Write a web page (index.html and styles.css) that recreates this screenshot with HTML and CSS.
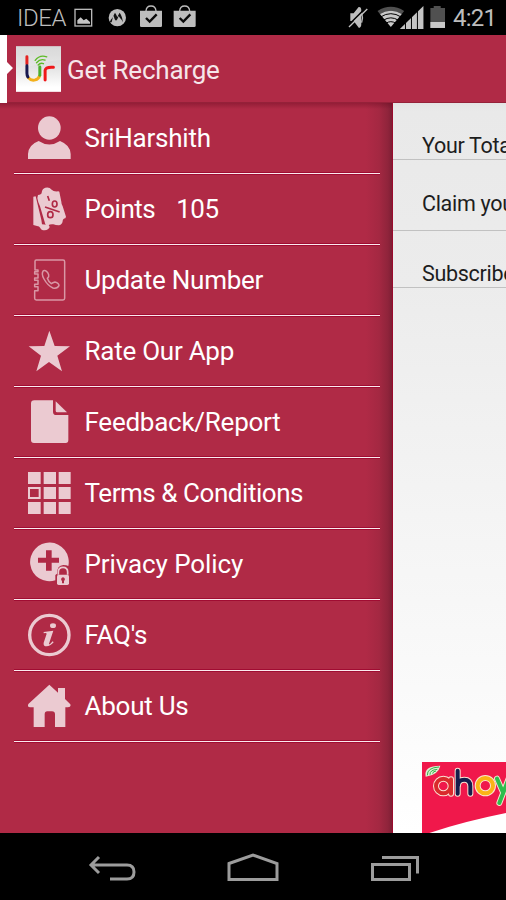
FILE: index.html
```html
<!DOCTYPE html>
<html lang="en">
<head>
<meta charset="utf-8">
<title>Get Recharge</title>
<link rel="stylesheet" href="styles.css">
</head>
<body>
<div class="screen">
  <header class="status">
    <span class="carrier">IDEA</span>
    <svg class="status-left" viewBox="210 0 390 105" aria-hidden="true">
      <rect x="225" y="28" width="50" height="50" fill="none" stroke="#b9b9b9" stroke-width="4"/>
      <path d="M232 71V61l10-9 9 9 8-5 11 10v5z" fill="#c4c4c4"/>
      <circle cx="352" cy="53" r="26" fill="#bdbdbd"/>
      <path d="M335 67q4-20 10-29 5 7 7 14 3-8 7-14 7 9 10 29-4-9-9-13l-4-6-4 10-4 4-4-4-3-10-4 6q-5 4-8 13z" fill="#111"/>
      <g id="bag">
        <path d="M420 32h66v45q0 4-4 4h-58q-4 0-4-4z" fill="#bdbdbd"/>
        <path d="M438 33q1-15 15-15t15 15" fill="none" stroke="#bdbdbd" stroke-width="4"/>
        <path d="M438 54l11 11 21-22" fill="none" stroke="#0a0a0a" stroke-width="7"/>
      </g>
      <use href="#bag" x="101"/>
    </svg>
    <span class="grow"></span>
    <svg class="status-right" viewBox="280 0 310 105" aria-hidden="true">
      <path d="M293 40h10l15-19q8-1 8 10v42q0 10-7 11l-16-21h-10z" fill="#bdbdbd"/>
      <path d="M327 37q5 16 0 31" fill="none" stroke="#bdbdbd" stroke-width="4"/>
      <path d="M285 78l54-54" stroke="#000" stroke-width="5"/>
      <path d="M289 81l55-54" stroke="#c4c4c4" stroke-width="4"/>
      <path d="M375 33q40-25 80 0l-7 9q-33-20-66 0z" fill="#505050"/>
      <path d="M382 42q33-20 66 0l-33 39z" fill="#c9c9c9"/>
      <path d="M384 51q31-20 62 0M392 61q23-15 46 0M400 70q15-10 30 0" fill="none" stroke="#000" stroke-width="3"/>
      <path d="M442 87l71-69v69z" fill="#c4c4c4"/>
      <path d="M459 60v28M477 45v43M495 28v60" stroke="#000" stroke-width="3"/>
      <path d="M534 24h10v-6h21v6h13v60h-44z" fill="#505050"/>
      <path d="M534 66h44v18h-44z" fill="#c9c9c9"/>
    </svg>
    <span class="clock">4:21</span>
  </header>

  <div class="actionbar">
    <svg class="drawer-mark" viewBox="0 0 14 68" aria-hidden="true"><path d="M0 0h7v27l6 6-6 6v29H0z" fill="#fff"/></svg>
    <svg class="app-logo" viewBox="48 138 136 138" aria-hidden="true">
      <defs><linearGradient id="tile" x2="0" y2="1"><stop offset="0" stop-color="#d2d2d2"/><stop offset=".45" stop-color="#e2e2e2"/><stop offset=".9" stop-color="#fff"/></linearGradient></defs>
      <rect x="48" y="138" width="136" height="138" fill="url(#tile)"/>
      <path d="M48 138h136v42q-60 5-136 35z" fill="#fff" opacity=".15"/>
      <g fill="none" stroke-width="9" stroke-linecap="round">
        <path d="M81 170v22" stroke="#e42320"/>
        <path d="M85 233q8 10 21 7 10-3 13-12" stroke="#f3b01b"/>
        <path d="M81 197v23q0 6 3 11" stroke="#19194e"/>
        <path d="M120 201v25" stroke="#4cae2e"/>
        <path d="M136 240v-29q2-11 25-9" stroke="#ef1719"/>
        <path d="M106 181q13-18 35-11M110 188q11-13 26-8M115 195q7-8 16-4" stroke="#5dbb26" stroke-width="4"/>
      </g>
    </svg>
    <h1 class="title">Get Recharge</h1>
  </div>

  <main class="body">
    <nav class="drawer">
      <ul class="menu">
        <li class="item">
          <svg class="icon" viewBox="0 0 132 132"><ellipse cx="67" cy="36" rx="34" ry="35"/><path d="M3 129v-15q2-28 32-39 32 21 64 0 31 12 32 39v15z"/></svg>
          <span class="label">SriHarshith</span>
        </li>
        <li class="item">
          <svg class="icon" viewBox="0 0 132 132"><path d="M19 29l7-1 17 70 2 14 20 2 3 6q-3 9-15 10-11 0-13-7-3-6-10-6l-11-3z"/><path d="M33 24q10-1 11-7 1-12 11-15 12-3 19 6 6 7 20 5l3 1 6 30q0 8 4 14l10 31-2 5q-8 1-8 9-2 11-12 12-9 0-16-3-10-1-15 3-6 2-9-3L39 58q-6-11-8-25z"/><g class="cut" stroke-width="5"><ellipse cx="83" cy="51" rx="7" ry="9"/><ellipse cx="70" cy="83" rx="8" ry="9"/><path d="M54 60l44 15M62 27l5 14"/></g></svg>
          <span class="label points">Points <b class="count">105</b></span>
        </li>
        <li class="item">
          <svg class="icon line" viewBox="0 0 132 132"><path d="M24 36V10q0-4 4-4h80q5 0 5 5v110q0 5-5 5H28q-5 0-5-5V98h10V86H23v-7h10V67H23v-7h10V48H23v-7h10v-5z"/><path d="M49 38q-7 9 2 25 11 20 27 27 13 3 18-7 0-8-12-11-7 2-11 5-9-6-12-16 6-5 4-11-6-15-16-12z"/></svg>
          <span class="label">Update Number</span>
        </li>
        <li class="item">
          <svg class="icon" viewBox="0 0 132 132"><path d="M67 5l16 46 46 1-38 28 14 47-39-28-38 28 14-47L5 52l47-1z"/></svg>
          <span class="label">Rate Our App</span>
        </li>
        <li class="item">
          <svg class="icon" viewBox="0 0 132 132"><path d="M22 1h56v34q0 10 10 10h36v75q0 9-8 9H21q-9 0-9-9V11q0-10 10-10z"/><path d="M86 4l34 33H91q-5 0-5-5z"/></svg>
          <span class="label">Feedback/Report</span>
        </li>
        <li class="item">
          <svg class="icon" viewBox="0 0 132 132"><path d="M3 3h38v36H3zM50 3h37v36H50zM95 3h36v36H95zM50 48h37v36H50zM95 48h36v36H95zM3 93h38v36H3zM50 93h37v36H50zM95 93h36v36H95z"/><path fill-rule="evenodd" d="M3 48h38v36H3zM9 54v24h26V54z"/></svg>
          <span class="label long">Terms &amp; Conditions</span>
        </li>
        <li class="item">
          <svg class="icon" viewBox="0 0 132 132"><path d="M124 72a58 58 0 1 0-39 43V99l5-4q0-25 19-26 10 0 15 3z"/><path class="hole" d="M57 25h17v22h22v15H74v24H57V62H33V47h24z"/><path d="M94 98v-8q0-14 14-14t14 14v8" class="stroke" stroke-width="5"/><rect x="90" y="98" width="36" height="31" rx="5"/><path class="hole" d="M108 106a6 6 0 0 1 3 11v7h-6v-7a6 6 0 0 1 3-11z"/></svg>
          <span class="label wide">Privacy Policy</span>
        </li>
        <li class="item">
          <svg class="icon" viewBox="0 0 132 132"><circle class="stroke" cx="67" cy="66" r="59" stroke-width="10"/><ellipse cx="78" cy="38" rx="9" ry="7"/><path d="M50 57l29-4-13 39q0 3 4 0l7-7 3 3q-11 12-21 12-11 0-9-11l9-27q-1-3-9-1z"/></svg>
          <span class="label">FAQ's</span>
        </li>
        <li class="item">
          <svg class="icon" viewBox="0 0 132 132"><path d="M67 2l26 24V12h21v33l16 16q3 9-7 9h-8v59H84V91q0-9-9-9H61q-8 0-8 9v38H20V70H10Q0 70 4 60z"/></svg>
          <span class="label">About Us</span>
        </li>
      </ul>
    </nav>
    <section class="content">
      <div class="row first">Your Total</div>
      <div class="row second">Claim your</div>
      <div class="row third">Subscribe</div>
      <svg class="banner" viewBox="126 66 252 213" role="img" aria-label="ahoy">
        <rect x="126" y="66" width="252" height="213" fill="#f0184b"/>
        <path d="M148 279q100-34 230-60v60z" fill="#fff"/>
        <path d="M137 110q-7-33 44-33-6 28-44 33z" fill="#dff0d4"/>
        <path d="M142 106q-1-23 35-25M150 104q-1-14 22-16M158 101q0-7 10-8" fill="none" stroke="#35b24a" stroke-width="3"/>
        <g class="wordmark-back"><circle cx="190" cy="138" r="22"/><path d="M213 118v43M233 92v69M234 137q0-18 19-18 18 0 18 20v22"/><circle cx="316" cy="137" r="23"/><path d="M351 116l17 39M386 116l-28 73"/></g>
        <g class="wordmark"><g stroke="#d92a2c"><circle cx="190" cy="138" r="22"/><path d="M213 118v43"/></g><path stroke="#171c4b" d="M233 92v69M234 137q0-18 19-18 18 0 18 20v22"/><circle stroke="#fbb316" cx="316" cy="137" r="23"/><path stroke="#2dbd4d" d="M351 116l17 39M386 116l-28 73"/></g>
      </svg>
    </section>
  </main>

  <footer class="navbar">
    <svg viewBox="60 833 400 67" aria-hidden="true">
      <path d="M99 857l-8 8 8 8M91 865h36q7 0 7 7t-7 7h-17"/>
      <path d="M229 863.5l24-8.500 24 8.500V879.500h-48z"/>
      <path d="M372.500 864.500h37v15h-37zM382 857.500h35.500V873.500"/>
    </svg>
  </footer>
</div>
</body>
</html>
```
FILE: styles.css
```css
* { box-sizing: border-box; }
body { margin: 0; background: #000; font-family: Roboto, "Liberation Sans", sans-serif; }
.screen { width: 506px; height: 900px; overflow: hidden; display: flex; flex-direction: column; }

.status { height: 35px; flex: none; display: flex; align-items: center; background: #000; color: #bdbdbd; font-size: 24px; font-weight: 300; padding-right: 10px; }
.carrier { width: 53px; margin-left: 17px; white-space: nowrap; letter-spacing: -.4px; }
.status-left { width: 130px; height: 35px; }
.grow { flex: 1; }
.status-right { width: 103px; height: 35px; flex: none; }
.clock { width: 43px; margin-left: 4px; font-weight: 400; letter-spacing: -.8px; white-space: nowrap; }

.actionbar { height: 68px; flex: none; display: flex; align-items: center; background: #b02a46; border-bottom: 1px solid #952139; }
.drawer-mark { width: 14px; height: 68px; }
.app-logo { width: 45px; height: 46px; margin-left: 2px; }
.title { margin: 2px 0 0 6px; color: #f6e6ea; font-size: 26px; font-weight: 400; letter-spacing: -.22px; white-space: nowrap; }

.body { flex: 1; min-height: 0; display: flex; }
.drawer { width: 393px; flex: none; background: linear-gradient(to bottom, rgba(80, 0, 20, .3), transparent 6px), linear-gradient(to left, #7e1e34 0, #8f243b 4px, #a42842 13px, #b02a46 26px); border-right: 1px solid #9a0a2d; }
.menu { list-style: none; margin: 0; padding: 0 12px 0 14px; }
.item { height: 71px; display: flex; align-items: center; padding-left: 13px; border-bottom: 1px solid #fbeaee; box-shadow: 0 1px 0 #a00c32, inset 0 -1px 0 #a00c32; }
.icon { width: 44px; height: 44px; fill: #ebcad1; }
.line { fill: none; stroke: #d997a5; stroke-width: 4.5; stroke-linejoin: round; }
.cut { fill: none; stroke: #b02a46; }
.hole { fill: #b02a46; }
.stroke { fill: none; stroke: #ebcad1; }
.label { margin-left: 13.5px; color: #fff; font-size: 26px; letter-spacing: -.25px; white-space: nowrap; }
.long { letter-spacing: -.45px; }
.wide { letter-spacing: -.1px; }
.points { display: flex; gap: 21px; letter-spacing: -.5px; }
.count { font-weight: 400; }

.content { flex: 1; min-width: 0; display: flex; flex-direction: column; overflow: hidden; background: linear-gradient(#e4e4e4, #e9e9e9 8px, #ececec 180px, #fff 730px); color: #1d1d1d; font-size: 21.5px; letter-spacing: -.3px; white-space: nowrap; }
.row { flex: none; display: flex; align-items: flex-end; padding-left: 29px; line-height: 26px; border-bottom: 1px solid #c1c1c1; }
.first { height: 57px; }
.second { height: 71px; padding-bottom: 13px; }
.third { height: 57px; }
.banner { width: 84px; height: 71px; margin: auto 0 0 29px; flex: none; }
.wordmark, .wordmark-back { fill: none; stroke-linecap: round; }
.wordmark { stroke-width: 12; }
.wordmark-back { stroke: #fbe3d2; stroke-width: 18; }

.navbar { height: 67px; flex: none; background: #000; padding-left: 60px; }
.navbar svg { width: 400px; height: 67px; display: block; fill: none; stroke: #9c9c9c; stroke-width: 3; }
```
